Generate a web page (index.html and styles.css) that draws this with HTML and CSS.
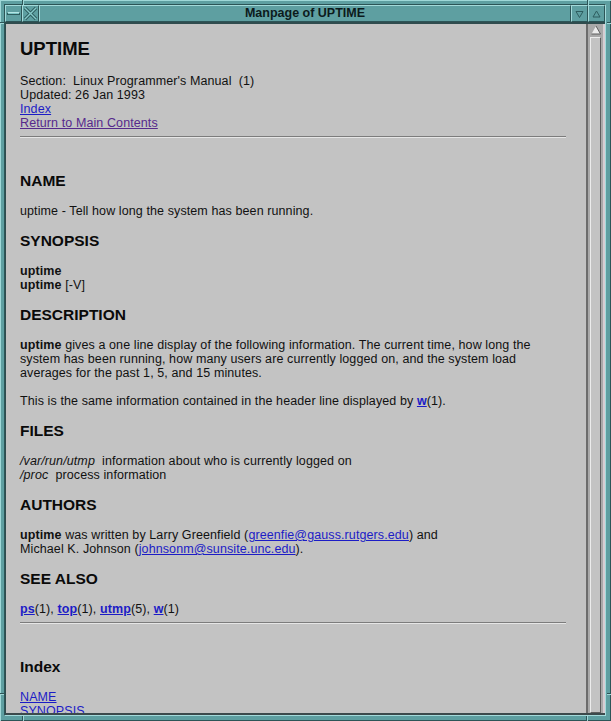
FILE: index.html
```html
<!DOCTYPE html>
<html>
<head>
<meta charset="utf-8">
<title>Manpage of UPTIME</title>
<link rel="stylesheet" href="styles.css">
</head>
<body>
<div class="win">
  <span class="notch nv" style="left:22px;top:0"></span>
  <span class="notch nv" style="left:587px;top:0"></span>
  <span class="notch nv" style="left:22px;bottom:0"></span>
  <span class="notch nv" style="left:586px;bottom:0"></span>
  <span class="notch nh" style="left:0;top:22px"></span>
  <span class="notch nh" style="right:0;top:22px"></span>
  <span class="notch nh" style="left:0;top:693px"></span>
  <span class="notch nh" style="right:0;top:693px"></span>
  <div class="inner">
    <div class="titlebar">
      <div class="tbtn">
        <svg width="15" height="15" viewBox="0 0 15 15"><rect x="1.5" y="6.5" width="12" height="2" fill="#7cc4c4" stroke="#2d5d5f" stroke-width="1"/><line x1="1.5" y1="6.5" x2="13.5" y2="6.5" stroke="#b4e6e6" stroke-width="1"/></svg>
      </div>
      <div class="tbtn">
        <svg width="15" height="15" viewBox="0 0 15 15"><path d="M2 2 L13 13 M13 2 L2 13" stroke="#2d5d5f" stroke-width="3.2" fill="none"/><path d="M2 2 L13 13 M13 2 L2 13" stroke="#86caca" stroke-width="1.4" fill="none"/></svg>
      </div>
      <div class="title">Manpage of UPTIME</div>
      <div class="tbtn">
        <svg width="15" height="15" viewBox="0 0 15 15"><path d="M4 5.5 L11 5.5 L7.5 11.5 Z" fill="none" stroke="#2d5d5f" stroke-width="1"/></svg>
      </div>
      <div class="tbtn">
        <svg width="15" height="15" viewBox="0 0 15 15"><path d="M4 11 L11 11 L7.5 5 Z" fill="none" stroke="#2d5d5f" stroke-width="1"/></svg>
      </div>
    </div>
    <div class="body">
      <div class="content">
        <h1>UPTIME</h1>
        <p class="meta">Section:&nbsp; Linux Programmer's Manual&nbsp; (1)<br>Updated: 26 Jan 1993<br><a href="#index">Index</a><br><a class="visited" href="#main">Return to Main Contents</a></p>
        <hr>
        <h2>NAME</h2>
        <p>uptime - Tell how long the system has been running.</p>
        <h2>SYNOPSIS</h2>
        <p><b>uptime</b><br><b>uptime</b> [-V]</p>
        <h2>DESCRIPTION</h2>
        <p><b>uptime</b> gives a one line display of the following information. The current time, how long the<br>system has been running, how many users are currently logged on, and the system load<br>averages for the past 1, 5, and 15 minutes.</p>
        <p>This is the same information contained in the header line displayed by <a href="#w"><b>w</b></a>(1).</p>
        <h2>FILES</h2>
        <p><i>/var/run/utmp</i>&nbsp; information about who is currently logged on<br><i>/proc</i>&nbsp; process information</p>
        <h2>AUTHORS</h2>
        <p><b>uptime</b> was written by Larry Greenfield (<a href="#mail1">greenfie@gauss.rutgers.edu</a>) and<br>Michael K. Johnson (<a href="#mail2">johnsonm@sunsite.unc.edu</a>).</p>
        <h2>SEE ALSO</h2>
        <p class="last"><a href="#ps"><b>ps</b></a>(1), <a href="#top"><b>top</b></a>(1), <a href="#utmp"><b>utmp</b></a>(5), <a href="#w"><b>w</b></a>(1)</p>
        <hr>
        <h2 id="index">Index</h2>
        <p><a href="#n">NAME</a><br><a href="#s">SYNOPSIS</a></p>
      </div>
      <div class="scrollbar">
        <div class="sb-arrow">
          <svg width="10" height="10" viewBox="0 0 10 10"><path d="M5 1 L9.5 9 L0.5 9 Z" fill="#ececec"/><path d="M5 1 L9.5 9 L0.5 9" fill="none" stroke="#5e5e5e" stroke-width="1"/></svg>
        </div>
        <div class="sb-thumb"></div>
      </div>
    </div>
  </div>
</div>
</body>
</html>
```

FILE: styles.css
```css
html, body {
  margin: 0;
  padding: 0;
}

body {
  width: 611px;
  height: 721px;
  overflow: hidden;
  background: #5e9fa1;
}

.win {
  position: relative;
  box-sizing: border-box;
  width: 611px;
  height: 721px;
  padding: 4px 5px 5px 4px;
  background: #5e9fa1;
  box-shadow: inset 1px 1px 0 #9fd8d8, inset -1px -1px 0 #2c5557;
}

.notch {
  position: absolute;
  background: #2c5557;
}

.nv {
  width: 1px;
  height: 5px;
  box-shadow: 1px 0 0 #9fd8d8;
}

.nh {
  width: 4px;
  height: 1px;
  box-shadow: 0 1px 0 #9fd8d8;
}

.inner {
  box-sizing: border-box;
  height: 100%;
  display: flex;
  flex-direction: column;
  border: 1px solid;
  border-color: #2c5557 #a3dada #a3dada #2c5557;
}

.titlebar {
  box-sizing: border-box;
  height: 17px;
  flex: none;
  display: flex;
  align-items: stretch;
  background: #5e9fa1;
}

.tbtn {
  box-sizing: border-box;
  width: 17px;
  flex: none;
  display: flex;
  align-items: center;
  justify-content: center;
  border: 1px solid;
  border-color: #a3dada #2c5557 #2c5557 #a3dada;
}

.title {
  flex: 1;
  box-sizing: border-box;
  border: 1px solid;
  border-color: #a3dada #2c5557 #2c5557 #a3dada;
  text-align: center;
  font-family: "Liberation Sans", Arial, sans-serif;
  font-weight: bold;
  font-size: 12.5px;
  line-height: 15px;
  color: #0c1a1c;
}

.body {
  flex: 1;
  min-height: 0;
  display: flex;
  border-top: 2px solid #2f4c4e;
  border-left: 1px solid #2f4c4e;
  border-bottom: 2px solid #3c4a4c;
  background: #c3c3c3;
}

.content {
  flex: 1;
  min-width: 0;
  overflow: hidden;
  padding: 14px 20px 0 14px;
  font-family: "Liberation Sans", Arial, sans-serif;
  font-size: 12.5px;
  line-height: 14px;
  letter-spacing: 0.1px;
  color: #111;
}

h1 {
  margin: 0 0 14px;
  font-size: 18.5px;
  line-height: 22px;
  font-weight: bold;
  letter-spacing: 0;
  color: #0a0a0a;
}

h2 {
  margin: 14px 0;
  font-size: 15.5px;
  line-height: 18px;
  font-weight: bold;
  letter-spacing: 0;
  color: #0a0a0a;
}

p {
  margin: 0 0 14px;
  white-space: nowrap;
}

p.meta,
p.last {
  margin-bottom: 0;
}

hr {
  margin: 6px 0 34px;
  height: 0;
  border: 0;
  border-top: 1px solid #7c7c7c;
  border-bottom: 1px solid #e6e6e6;
}

a {
  color: #1c1cc6;
  text-decoration: underline;
}

a.visited {
  color: #56298c;
}

i {
  font-style: italic;
}

.scrollbar {
  box-sizing: border-box;
  width: 19px;
  flex: none;
  display: flex;
  flex-direction: column;
  padding: 1px 2px 0 2px;
  background: #a9a9a9;
  border-left: 2px solid #6c6c6c;
  border-right: 2px solid #d6cdd2;
}

.sb-arrow {
  height: 10px;
  flex: none;
  display: flex;
  justify-content: center;
}

.sb-thumb {
  flex: 1;
  margin-top: 2px;
  border: 1px solid;
  border-color: #ececec #5e5e5e #5e5e5e #ececec;
  background: #c3c3c3;
}
```
